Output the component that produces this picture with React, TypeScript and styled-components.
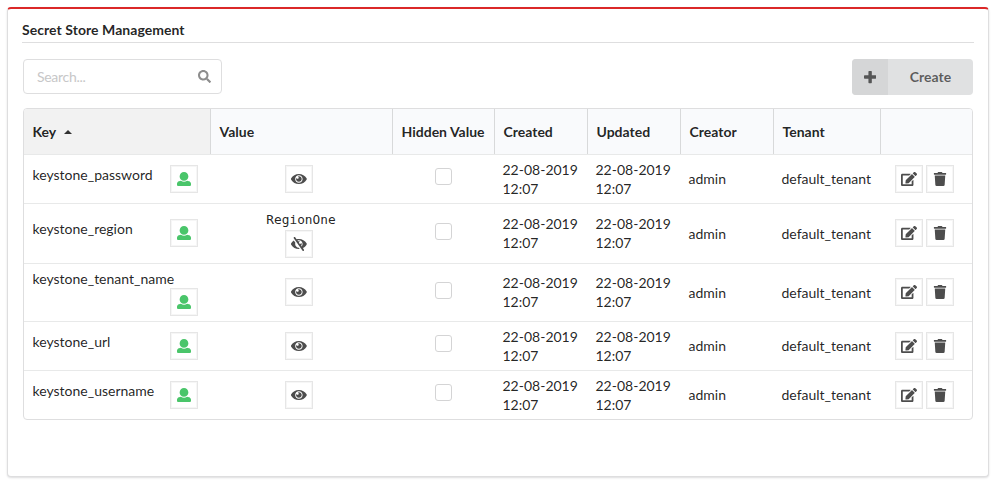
import React from 'react';
import styled, { createGlobalStyle } from 'styled-components';
import { FaEdit, FaSearch, FaTrash } from 'react-icons/fa';

const GlobalStyle = createGlobalStyle`
  *, *::before, *::after { box-sizing: border-box; }
  body {
    margin: 0;
    background: #fff;
    color: rgba(0, 0, 0, 0.87);
    font: 14px/19px Lato, sans-serif;
  }
`;

const Page = styled.main`
  height: 486px;
  padding: 7px 9px 9px 7px;
`;

const Segment = styled.section`
  height: 470px;
  padding: 14px;
  background: #fff;
  border: 1px solid #dededf;
  border-top: 2px solid #db2828;
  border-radius: 4px;
  box-shadow: 0 1px 2px rgba(34, 36, 38, 0.15);
`;

const Title = styled.h5`
  height: 20px;
  margin: 0;
  font-size: 14px;
  line-height: 14px;
  font-weight: 700;
  letter-spacing: 0.05px;
  border-bottom: 1px solid #dededf;
`;

const Toolbar = styled.div`
  display: flex;
  justify-content: space-between;
  align-items: flex-start;
  height: 49px;
  margin: 16px 1px 0;
`;

const SearchBox = styled.label`
  display: flex;
  align-items: center;
  width: 199px;
  height: 35px;
  padding: 0 10px 0 13px;
  border: 1px solid #dededf;
  border-radius: 4px;
  color: #8d8d8d;
`;

const SearchInput = styled.input`
  flex: 1;
  min-width: 0;
  padding: 0;
  border: 0;
  outline: 0;
  background: transparent;
  font: 14px/17px Lato, sans-serif;
  letter-spacing: -0.3px;
  &::placeholder { color: #c7c7c8; opacity: 1; }
`;

const CreateButton = styled.button`
  display: flex;
  width: 121px;
  height: 36px;
  padding: 0;
  overflow: hidden;
  border: 0;
  border-radius: 4px;
  background: #e0e1e2;
  color: rgba(0, 0, 0, 0.6);
  font: 700 14px/36px Lato, sans-serif;
`;

const CreateIcon = styled.span`
  display: flex;
  align-items: center;
  justify-content: center;
  width: 36px;
  height: 36px;
  background: #d5d6d7;
`;

const CreateLabel = styled.span`
  flex: 1;
  text-align: center;
`;

const Table = styled.table`
  width: 950px;
  margin-left: 1px;
  table-layout: fixed;
  border: 1px solid #dededf;
  border-radius: 4px;
  border-collapse: separate;
  border-spacing: 0;
  overflow: hidden;
`;

const Col = styled.col<{ $width: number }>`
  width: ${(p) => p.$width}px;
`;

const HeadCell = styled.th<{ $sorted?: boolean }>`
  height: 45px;
  padding: 0 0 1px 8.5px;
  border-left: 1px solid #d8d9da;
  background: ${(p) => (p.$sorted ? '#f2f2f2' : '#f9fafc')};
  font-weight: 700;
  text-align: left;
  white-space: nowrap;
  &:first-child { border-left: 0; }
`;

const Caret = styled.span`
  display: inline-block;
  margin-left: 7.5px;
  vertical-align: 3px;
  border: 4px solid transparent;
  border-top: 0;
  border-bottom-color: rgba(0, 0, 0, 0.8);
`;

const Row = styled.tr<{ $height: number }>`
  height: ${(p) => p.$height}px;
`;

const Cell = styled.td<{ $center?: boolean }>`
  padding: 0 8.5px 1px;
  border-top: 1px solid #e8e9e9;
  vertical-align: middle;
  text-align: ${(p) => (p.$center ? 'center' : 'left')};
`;

const KeyLine = styled.div`
  display: flex;
  flex-wrap: wrap;
  justify-content: space-between;
  width: 165.5px;
`;

const KeyName = styled.span<{ $wraps?: boolean }>`
  height: 20px;
  padding-top: ${(p) => (p.$wraps ? 1 : 0)}px;
`;

const DateText = styled.div`
  span { display: block; white-space: nowrap; }
`;

const IconButton = styled.button<{ $public?: boolean }>`
  display: inline-flex;
  align-items: center;
  justify-content: center;
  width: 28px;
  height: 28px;
  padding: 0;
  margin-left: ${(p) => (p.$public ? 'auto' : '0')};
  border: 1px solid #e6e6e6;
  background: #fff;
  box-shadow: inset 0 0 0 1px #f6f6f6;
  color: ${(p) => (p.$public ? '#4ac56a' : '#4d4d4d')};
  svg { display: block; }
`;

const ValueBox = styled.div`
  display: flex;
  flex-direction: column;
  align-items: center;
  padding-right: 4px;
`;

const Secret = styled.code`
  height: 22px;
  padding-left: 4px;
  font: 12.8px/24px "DejaVu Sans Mono", monospace;
`;

const Check = styled.input`
  appearance: none;
  display: block;
  width: 17px;
  height: 17px;
  margin: 0 auto 4px;
  border: 1px solid #d4d4d5;
  border-radius: 3px;
  background: #fff;
`;

const Actions = styled.div`
  display: flex;
  gap: 3px;
  margin-left: 6.5px;
`;

const Glyph = ({ box, d, size }: { box: string; d: string; size: [number, number] }) => (
  <svg viewBox={box} width={size[0]} height={size[1]} fill="currentColor" aria-hidden="true">
    <path d={d} />
  </svg>
);

const PLUS =
  'M448 294.2v-76.4c0-13.3-10.7-24-24-24H286.2V56c0-13.3-10.7-24-24-24h-76.4c-13.3 0-24 10.7-24 24v137.8H24c-13.3 0-24 10.7-24 24v76.4c0 13.3 10.7 24 24 24h137.8V456c0 13.3 10.7 24 24 24h76.4c13.3 0 24-10.7 24-24V318.2H424c13.3 0 24-10.7 24-24z';
const USER =
  'M256 0c88.366 0 160 71.634 160 160s-71.634 160-160 160S96 248.366 96 160 167.634 0 256 0zm183.283 333.821l-71.313-17.828c-74.923 53.89-165.738 41.864-223.94 0l-71.313 17.828C29.981 344.505 0 382.903 0 426.955V464c0 26.51 21.49 48 48 48h416c26.51 0 48-21.49 48-48v-37.045c0-44.052-29.981-82.45-72.717-93.134z';
const EYE =
  'M569.354 231.631C512.969 135.949 407.81 72 288 72 168.14 72 63.004 135.994 6.646 231.631a47.999 47.999 0 0 0 0 48.739C63.031 376.051 168.19 440 288 440c119.86 0 224.996-63.994 281.354-159.631a47.997 47.997 0 0 0 0-48.738zM288 392c-75.162 0-136-60.827-136-136 0-75.162 60.826-136 136-136 75.162 0 136 60.826 136 136 0 75.162-60.826 136-136 136zm104-136c0 57.438-46.562 104-104 104s-104-46.562-104-104c0-17.708 4.431-34.379 12.236-48.973l-.001.032c0 23.651 19.173 42.823 42.824 42.823s42.824-19.173 42.824-42.823c0-23.651-19.173-42.824-42.824-42.824l-.032.001C253.621 156.431 270.292 152 288 152c57.438 0 104 46.562 104 104z';
const EYE_SLASH =
  'M286.693 391.984l32.579 46.542A333.958 333.958 0 0 1 288 440C168.19 440 63.031 376.051 6.646 280.369a47.999 47.999 0 0 1 0-48.739c24.023-40.766 56.913-75.775 96.024-102.537l57.077 81.539C154.736 224.82 152 240.087 152 256c0 74.736 60.135 135.282 134.693 135.984zm282.661-111.615c-31.667 53.737-78.747 97.46-135.175 125.475l.011.015 41.47 59.2c7.6 10.86 4.96 25.82-5.9 33.42l-13.11 9.18c-10.86 7.6-25.82 4.96-33.42-5.9L100.34 46.94c-7.6-10.86-4.96-25.82 5.9-33.42l13.11-9.18c10.86-7.6 25.82-4.96 33.42 5.9l51.038 72.617C230.68 75.776 258.905 72 288 72c119.81 0 224.969 63.949 281.354 159.631a48.002 48.002 0 0 1 0 48.738zM424 256c0-75.174-60.838-136-136-136-17.939 0-35.056 3.473-50.729 9.772l19.299 27.058c25.869-8.171 55.044-6.163 80.4 7.41h-.03c-23.65 0-42.82 19.17-42.82 42.82 0 23.626 19.147 42.82 42.82 42.82 23.65 0 42.82-19.17 42.82-42.82v-.03c18.462 34.49 16.312 77.914-8.25 110.95v.01l19.314 27.061C411.496 321.2 424 290.074 424 256z';

const COLUMNS = [
  { label: 'Key', width: 186 },
  { label: 'Value', width: 182 },
  { label: 'Hidden Value', width: 102 },
  { label: 'Created', width: 93 },
  { label: 'Updated', width: 93 },
  { label: 'Creator', width: 93 },
  { label: 'Tenant', width: 107 },
  { label: '', width: 92 },
];

const SECRETS: { name: string; height: number; value?: string; wraps?: boolean }[] = [
  { name: 'keystone_password', height: 49 },
  { name: 'keystone_region', height: 60, value: 'RegionOne' },
  { name: 'keystone_tenant_name', height: 58, wraps: true },
  { name: 'keystone_url', height: 49 },
  { name: 'keystone_username', height: 49 },
];

const Timestamp = ({ date, time }: { date: string; time: string }) => (
  <DateText>
    <span>{date}</span>
    <span>{time}</span>
  </DateText>
);

export default function App() {
  return (
    <Page>
      <GlobalStyle />
      <Segment>
        <Title>Secret Store Management</Title>
        <Toolbar>
          <SearchBox>
            <SearchInput placeholder="Search..." />
            <FaSearch size={13} />
          </SearchBox>
          <CreateButton>
            <CreateIcon>
              <Glyph box="0 0 448 512" d={PLUS} size={[12.25, 14]} />
            </CreateIcon>
            <CreateLabel>Create</CreateLabel>
          </CreateButton>
        </Toolbar>
        <Table>
          <colgroup>
            {COLUMNS.map((c) => (
              <Col key={c.label} $width={c.width} />
            ))}
          </colgroup>
          <thead>
            <tr>
              {COLUMNS.map((c, i) => (
                <HeadCell key={c.label} $sorted={i === 0}>
                  {c.label}
                  {i === 0 && <Caret />}
                </HeadCell>
              ))}
            </tr>
          </thead>
          <tbody>
            {SECRETS.map((s) => (
              <Row key={s.name} $height={s.height}>
                <Cell>
                  <KeyLine>
                    <KeyName $wraps={s.wraps}>{s.name}</KeyName>
                    <IconButton $public aria-label="Visibility">
                      <Glyph box="0 0 512 512" d={USER} size={[14, 14]} />
                    </IconButton>
                  </KeyLine>
                </Cell>
                <Cell $center>
                  <ValueBox>
                    {s.value && <Secret>{s.value}</Secret>}
                    <IconButton aria-label="Toggle value">
                      {s.value ? (
                        <Glyph box="0 0 576 512" d={EYE_SLASH} size={[15.75, 14]} />
                      ) : (
                        <Glyph box="0 0 576 512" d={EYE} size={[15.75, 14]} />
                      )}
                    </IconButton>
                  </ValueBox>
                </Cell>
                <Cell $center>
                  <Check type="checkbox" aria-label="Hidden value" />
                </Cell>
                <Cell>
                  <Timestamp date="22-08-2019" time="12:07" />
                </Cell>
                <Cell>
                  <Timestamp date="22-08-2019" time="12:07" />
                </Cell>
                <Cell>admin</Cell>
                <Cell>default_tenant</Cell>
                <Cell>
                  <Actions>
                    <IconButton aria-label="Edit">
                      <FaEdit size={16} />
                    </IconButton>
                    <IconButton aria-label="Delete">
                      <FaTrash size={14} />
                    </IconButton>
                  </Actions>
                </Cell>
              </Row>
            ))}
          </tbody>
        </Table>
      </Segment>
    </Page>
  );
}
